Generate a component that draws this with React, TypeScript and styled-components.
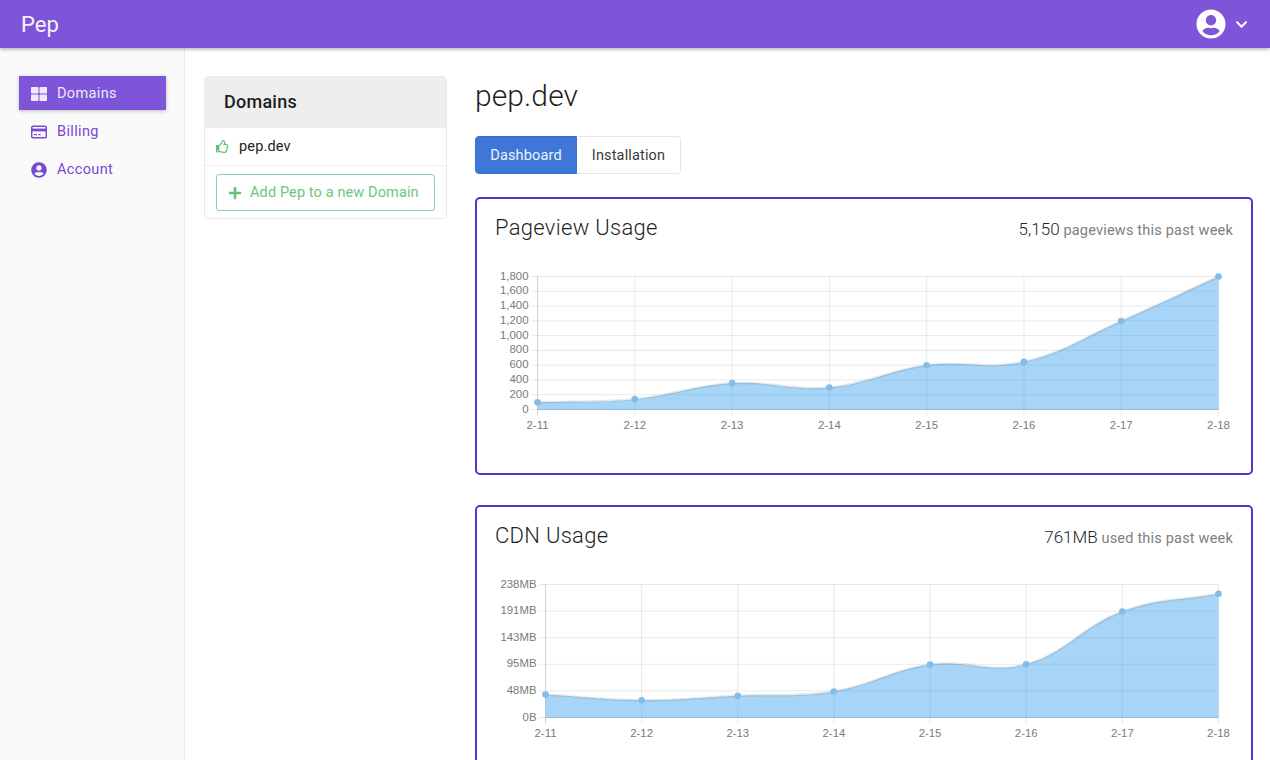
import React from "react";
import styled, { createGlobalStyle } from "styled-components";
import { FaThLarge, FaUserCircle, FaRegThumbsUp, FaPlus, FaChevronDown } from "react-icons/fa";

const Global = createGlobalStyle`
  html, body { margin: 0; padding: 0; background: #fff; }
  body { font-family: Roboto, "Liberation Sans", sans-serif; color: #212529; }
  * { box-sizing: border-box; }
`;

const Shell = styled.div`
  height: 100vh;
  display: flex;
  flex-direction: column;
  overflow: hidden;
`;

const TopBar = styled.header`
  position: relative;
  z-index: 2;
  flex: none;
  height: 48px;
  display: flex;
  align-items: center;
  justify-content: space-between;
  padding: 0 22px 0 21px;
  background: #7e55d8;
  color: #fff;
  box-shadow: 0 1px 4px rgba(0, 0, 0, 0.35);
`;

const Brand = styled.div`
  font-size: 22px;
  font-weight: 400;
  color: #f6f2fd;
`;

const UserMenu = styled.div`
  display: flex;
  align-items: center;
  gap: 9px;
`;

const Body = styled.div`
  flex: 1;
  display: flex;
  min-height: 0;
`;

const Sidebar = styled.nav`
  flex: none;
  width: 185px;
  padding: 28px 18px 0 19px;
  background: #fafafa;
  border-right: 1px solid #e9e9e9;
  display: flex;
  flex-direction: column;
`;

const NavItem = styled.a<{ $active?: boolean }>`
  height: ${(p) => (p.$active ? "34px" : "38px")};
  padding-top: ${(p) => (p.$active ? "1px" : "5px")};
  display: flex;
  align-items: center;
  gap: 10px;
  padding-left: 12px;
  font-size: 14.5px;
  letter-spacing: 0.35px;
  color: ${(p) => (p.$active ? "#eee8fa" : "#7648d4")};
  background: ${(p) => (p.$active ? "#7e55d8" : "transparent")};
  box-shadow: ${(p) => (p.$active ? "0 1px 4px rgba(0,0,0,.25)" : "none")};
  & > svg { flex: none; width: 16px; height: 16px; }
`;

const Content = styled.div`
  flex: 1;
  display: flex;
  gap: 28px;
  padding: 28px 17px 0 19px;
  min-width: 0;
`;

const DomainColumn = styled.aside`
  flex: none;
  width: 243px;
`;

const DomainCard = styled.div`
  border: 1px solid #eaeaea;
  border-radius: 5px;
  overflow: hidden;
  background: #fff;
`;

const DomainHeader = styled.div`
  height: 51px;
  display: flex;
  align-items: center;
  padding: 0 0 2px 19px;
  background: #eeeeee;
  font-size: 18px;
  font-weight: 500;
  letter-spacing: 0.25px;
  color: #1d1d1d;
`;

const DomainRow = styled.div`
  height: 38px;
  display: flex;
  align-items: center;
  gap: 10px;
  padding-left: 11px;
  border-bottom: 1px solid #eeeeee;
  font-size: 14.5px;
  letter-spacing: 0.15px;
  color: #222;
  & > svg { color: #5fc27a; width: 13px; height: 13px; }
`;

const AddWrap = styled.div`
  padding: 8px 11px 7px;
`;

const AddButton = styled.button`
  width: 100%;
  height: 37px;
  padding: 0 0 0 11px;
  display: flex;
  align-items: center;
  gap: 8px;
  background: #fff;
  border: 1px solid #8ad49e;
  border-radius: 3px;
  color: #6cc585;
  font: 400 14.5px Roboto, sans-serif;
  letter-spacing: 0.12px;
  & > svg { width: 14px; height: 14px; color: #62c17c; }
`;

const Main = styled.main`
  flex: 1;
  min-width: 0;
`;

const Title = styled.h1`
  margin: 0 0 21px;
  height: 39px;
  line-height: 39px;
  font-size: 30px;
  font-weight: 300;
  color: #1f1f1f;
  letter-spacing: 0.1px;
`;

const Tabs = styled.div`
  display: inline-flex;
  height: 38px;
  margin-bottom: 23px;
  vertical-align: top;
`;

const Tab = styled.button<{ $active?: boolean }>`
  height: 38px;
  font: 400 14.5px Roboto, sans-serif;
  letter-spacing: 0.15px;
  width: ${(p) => (p.$active ? "102px" : "104px")};
  padding: 0;
  color: ${(p) => (p.$active ? "#eef3fc" : "#3a3a3a")};
  background: ${(p) => (p.$active ? "#3f77d8" : "#fff")};
  border: 1px solid ${(p) => (p.$active ? "#3a6fcb" : "#e6e6e6")};
  border-left-width: ${(p) => (p.$active ? "1px" : "0")};
  border-radius: ${(p) => (p.$active ? "4px 0 0 4px" : "0 4px 4px 0")};
`;

const UsageCard = styled.section`
  height: 278px;
  margin-bottom: 30px;
  padding: 16px 18px 0;
  border: 2px solid #5a32cc;
  border-radius: 5px;
  background: #fff;
`;

const CardHead = styled.div`
  height: 51px;
  display: flex;
  justify-content: space-between;
  align-items: flex-start;
`;

const CardTitle = styled.h2`
  margin: 0;
  font-size: 22px;
  font-weight: 300;
  line-height: 26px;
  letter-spacing: 0.3px;
  color: #1f1f1f;
`;

const Stat = styled.div`
  padding-top: 1px;
  font-size: 14.5px;
  line-height: 26px;
  letter-spacing: 0.2px;
  color: #808080;
  & > b { font-size: 17px; font-weight: 300; color: #1c2433; letter-spacing: 0; }
`;

const ChartSvg = styled.svg`
  display: block;
  & text { font: 11.4px "Liberation Sans", Arial, sans-serif; fill: #7a7a7a; }
`;

const CardIcon = () => (
  <svg viewBox="0 0 16 16" fill="none" stroke="currentColor">
    <rect x="0.7" y="2.2" width="14.6" height="11.6" rx="1.4" strokeWidth="1.5" />
    <rect x="0.7" y="4.6" width="14.6" height="2.8" fill="currentColor" stroke="none" />
    <path d="M3 10.7h3M7.4 10.7h2.2" strokeWidth="1.3" />
  </svg>
);

type ChartProps = {
  left: number;
  xs: string[];
  ys: string[];
  /** Point heights above the baseline, as a fraction of the plot height */
  values: number[];
};

const W = 738;
const H = 170;
const RIGHT = 723.5;
const TOP = 10.5;
const BOTTOM = 143.5;

function splinePath(pts: [number, number][]) {
  const t = 0.4;
  const ctrl = pts.map((p, i) => {
    const a = pts[Math.max(i - 1, 0)];
    const b = pts[Math.min(i + 1, pts.length - 1)];
    const d01 = Math.hypot(p[0] - a[0], p[1] - a[1]);
    const d12 = Math.hypot(b[0] - p[0], b[1] - p[1]);
    const s = d01 + d12 || 1;
    return {
      px: p[0] - (t * d01 / s) * (b[0] - a[0]),
      py: p[1] - (t * d01 / s) * (b[1] - a[1]),
      nx: p[0] + (t * d12 / s) * (b[0] - a[0]),
      ny: p[1] + (t * d12 / s) * (b[1] - a[1]),
    };
  });
  let d = `M${pts[0][0]} ${pts[0][1]}`;
  for (let i = 1; i < pts.length; i++) {
    d += ` C${ctrl[i - 1].nx} ${ctrl[i - 1].ny} ${ctrl[i].px} ${ctrl[i].py} ${pts[i][0]} ${pts[i][1]}`;
  }
  return d;
}

function Chart({ left, xs, ys, values }: ChartProps) {
  const n = xs.length - 1;
  const m = ys.length - 1;
  const xAt = (i: number) => left + ((RIGHT - left) * i) / n;
  const yAt = (i: number) => TOP + ((BOTTOM - TOP) * i) / m;
  const pts = values.map((v, i) => [xAt(i), BOTTOM - v * (BOTTOM - TOP)] as [number, number]);
  const line = splinePath(pts);
  return (
    <ChartSvg width={W} height={H} viewBox={`0 0 ${W} ${H}`}>
      {ys.map((_, i) => (
        <line key={i} x1={left - 6} x2={RIGHT} y1={yAt(i)} y2={yAt(i)} stroke="rgba(0,0,0,.085)" />
      ))}
      {xs.map((_, i) => (
        <line key={i} x1={xAt(i)} x2={xAt(i)} y1={TOP} y2={BOTTOM + 6} stroke={i === 0 ? "rgba(0,0,0,.17)" : "rgba(0,0,0,.085)"} />
      ))}
      <path d={`${line} L${RIGHT} ${BOTTOM} L${left} ${BOTTOM} Z`} fill="rgba(33,150,238,.4)" />
      <path d={line} fill="none" stroke="rgba(0,0,0,.09)" strokeWidth={2.5} />
      <line x1={left} x2={RIGHT} y1={BOTTOM} y2={BOTTOM} stroke="rgba(50,120,190,.3)" />
      {pts.map((p, i) => (
        <circle key={i} cx={p[0]} cy={p[1]} r={3.3} fill="#80bdeb" />
      ))}
      {ys.map((s, i) => (
        <text key={s} x={left - 9} y={yAt(i) + 3} textAnchor="end">{s}</text>
      ))}
      {xs.map((s, i) => (
        <text key={s} x={xAt(i)} y={BOTTOM + 19} textAnchor="middle">{s}</text>
      ))}
    </ChartSvg>
  );
}

const DAYS = ["2-11", "2-12", "2-13", "2-14", "2-15", "2-16", "2-17", "2-18"];

export default function App() {
  return (
    <Shell>
      <Global />
      <TopBar>
        <Brand>Pep</Brand>
        <UserMenu>
          <FaUserCircle size={30} />
          <FaChevronDown size={13} />
        </UserMenu>
      </TopBar>
      <Body>
        <Sidebar>
          <NavItem $active><FaThLarge />Domains</NavItem>
          <NavItem><CardIcon />Billing</NavItem>
          <NavItem><FaUserCircle />Account</NavItem>
        </Sidebar>
        <Content>
          <DomainColumn>
            <DomainCard>
              <DomainHeader>Domains</DomainHeader>
              <DomainRow><FaRegThumbsUp />pep.dev</DomainRow>
              <AddWrap>
                <AddButton><FaPlus />Add Pep to a new Domain</AddButton>
              </AddWrap>
            </DomainCard>
          </DomainColumn>
          <Main>
            <Title>pep.dev</Title>
            <Tabs>
              <Tab $active>Dashboard</Tab>
              <Tab>Installation</Tab>
            </Tabs>
            <UsageCard>
              <CardHead>
                <CardTitle>Pageview Usage</CardTitle>
                <Stat><b>5,150</b> pageviews this past week</Stat>
              </CardHead>
              <Chart
                left={42.5}
                xs={DAYS}
                ys={["1,800", "1,600", "1,400", "1,200", "1,000", "800", "600", "400", "200", "0"]}
                values={[0.055, 0.078, 0.198, 0.165, 0.333, 0.358, 0.665, 1]}
              />
            </UsageCard>
            <UsageCard>
              <CardHead>
                <CardTitle>CDN Usage</CardTitle>
                <Stat><b>761MB</b> used this past week</Stat>
              </CardHead>
              <Chart
                left={50.5}
                xs={DAYS}
                ys={["238MB", "191MB", "143MB", "95MB", "48MB", "0B"]}
                values={[0.172, 0.13, 0.163, 0.196, 0.398, 0.4, 0.797, 0.93]}
              />
            </UsageCard>
          </Main>
        </Content>
      </Body>
    </Shell>
  );
}
